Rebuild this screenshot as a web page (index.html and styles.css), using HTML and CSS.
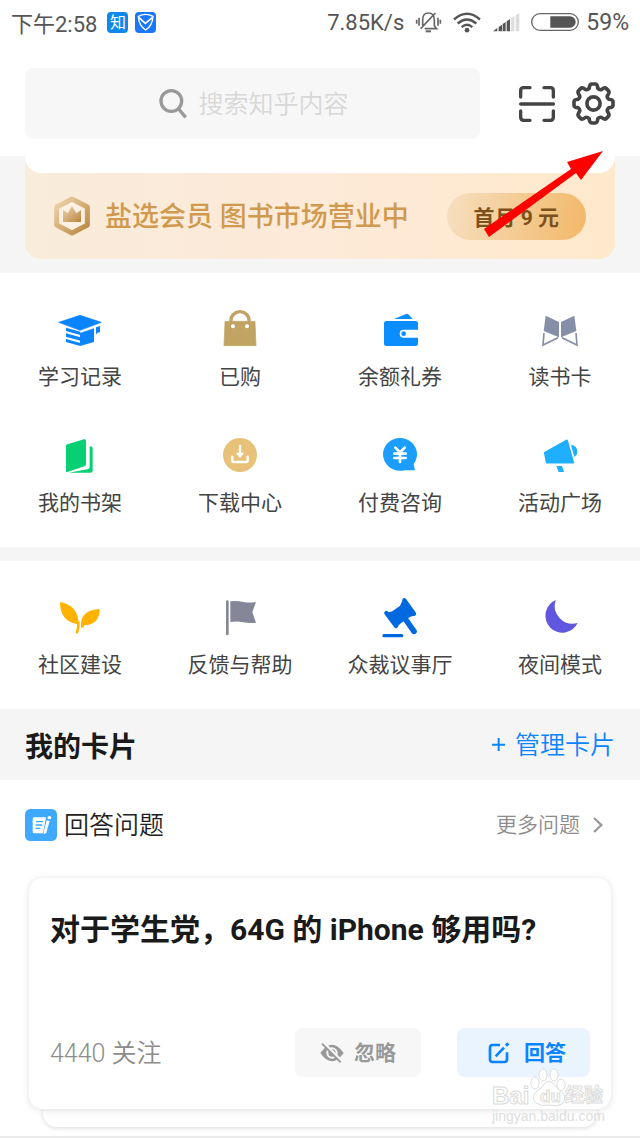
FILE: index.html
```html
<!DOCTYPE html>
<html lang="zh-CN">
<head>
<meta charset="utf-8">
<meta name="viewport" content="width=device-width, initial-scale=1">
<title>我的</title>
<link rel="stylesheet" href="styles.css">
</head>
<body>
<header class="top">
  <div class="status">
    <span class="status-time">下午2:58</span>
    <span class="badge badge-zhi">知</span>
    <svg class="badge-shield" viewBox="0 0 63 63" aria-hidden="true"><rect width="63" height="63" rx="12" fill="#1a76fb"/><path d="M10 13Q32 1 54 13Q52 42 32 54Q12 42 10 13Z" fill="none" stroke="#fff" stroke-width="4"/><path d="M12 17L31 34L52 17" fill="none" stroke="#fff" stroke-width="5"/></svg>
    <span class="status-speed">7.85K/s</span>
    <svg class="ic-bell" viewBox="0 0 75 66" fill="none" stroke="#666" stroke-width="5" aria-hidden="true"><path d="M20 48V26Q20 6 37 6Q55 6 55 26V44L62 53H26M14 53L58 6M2 26V38M9 20V44M66 20V44M73 26V38"/><path d="M29 61H45" stroke-width="6"/></svg>
    <svg class="ic-wifi" viewBox="0 0 84 62" fill="none" stroke="#555" stroke-width="7" aria-hidden="true"><path d="M3 22Q42-12 81 22M14 34Q42 10 70 34M26 45Q42 31 58 45"/><circle cx="42" cy="54" r="7" fill="#555" stroke="none"/></svg>
    <svg class="ic-signal" viewBox="0 0 81 57" aria-hidden="true"><path d="M0 55L13 45V55ZM17 42L27 35V55H17ZM29 33L38 27V55H29ZM41 25L51 18V55H41Z" fill="#555"/><path d="M54 16L64 9V55H54ZM68 7L79 0V55H68Z" fill="#ddd"/></svg>
    <svg class="ic-battery" viewBox="0 0 144 54" aria-hidden="true"><rect x="2" y="2" width="140" height="50" rx="25" fill="none" stroke="#666" stroke-width="4"/><path d="M58 10H117A17 17 0 0 1 117 44H58Z" fill="#555"/></svg>
    <span class="status-percent">59%</span>
  </div>
  <div class="tools">
    <label class="search">
      <svg class="search-icon" viewBox="0 0 90 90" fill="none" stroke="#999" stroke-width="10" aria-hidden="true"><circle cx="43" cy="36" r="31"/><path d="M65 60L86 85"/></svg>
      <input class="search-input" type="text" placeholder="搜索知乎内容" aria-label="搜索知乎内容">
    </label>
    <button class="icon-button" aria-label="扫一扫">
      <svg class="scan" viewBox="0 0 108 108" fill="none" stroke="#444" stroke-width="10" stroke-linecap="round" aria-hidden="true"><path d="M5 33V14Q5 5 14 5H33M75 5H94Q103 5 103 14V33M103 75V94Q103 103 94 103H75M33 103H14Q5 103 5 94V75M5 54H103"/></svg>
    </button>
    <button class="icon-button" aria-label="设置">
      <svg class="gear" viewBox="-65 -65 130 130" fill="none" stroke="#444" stroke-width="11" stroke-linejoin="round" aria-hidden="true"><path d="M-13-46Q-12-59-5-59H5Q12-59 13-46Q18-40 24-42Q34-50 39-45L45-39Q50-34 42-24Q40-18 46-13Q59-12 59-5V5Q59 12 46 13Q40 18 42 24Q50 34 45 39L39 45Q34 50 24 42Q18 40 13 46Q12 59 5 59H-5Q-12 59-13 46Q-18 40-24 42Q-34 50-39 45L-45 39Q-50 34-42 24Q-40 18-46 13Q-59 12-59 5V-5Q-59-12-46-13Q-40-18-42-24Q-50-34-45-39L-39-45Q-34-50-24-42Q-18-40-13-46Z"/><circle r="20"/></svg>
    </button>
  </div>
</header>

<main>
  <section class="vip">
    <div class="vip-card">
      <div class="vip-cap"></div>
      <div class="vip-row">
        <svg class="vip-logo" viewBox="0 0 108 120" aria-hidden="true"><defs><linearGradient id="gold" x1="0" y1="0" x2="1" y2="1"><stop offset="0" stop-color="#f0d5ae"/><stop offset="1" stop-color="#b9853f"/></linearGradient></defs><path d="M54 9L100 33V87L54 111L8 87V33Z" fill="#fbf0e2" stroke="url(#gold)" stroke-width="15" stroke-linejoin="round"/><path d="M27 42L41 52L54 30L67 52L81 42V78H27Z" fill="url(#gold)"/></svg>
        <strong class="vip-text">盐选会员 图书市场营业中</strong>
        <button class="vip-button">首月 9 元</button>
      </div>
    </div>
    <svg class="arrow" viewBox="0 0 120 88" aria-hidden="true"><path d="M120 1L98 30L93 23L6 87L1 79L88 19L84 12Z" fill="#f00"/></svg>
  </section>

  <nav class="grid">
    <a class="tile" href="#"><svg class="tile-icon" viewBox="0 0 144 144" fill="#0a84ff"><path d="M8 49L72 28L136 49L72 73Z" stroke="#0a84ff" stroke-width="2" stroke-linejoin="round"/><path d="M72 81L114 67V108L72 120ZM30 65L73 77V87L30 75ZM30 82L73 94V104L30 92ZM30 99L73 111V120L30 108ZM120 64L132 60V79L124 80L120 86Z"/></svg>学习记录</a>
    <a class="tile" href="#"><svg class="tile-icon" viewBox="0 0 144 144" fill="#c1a364"><path d="M27 46H117L120 119H24Z" stroke="#c1a364" stroke-width="2" stroke-linejoin="round"/><path d="M45 48V43A27 26 0 0 1 99 43V48" fill="none" stroke="#c1a364" stroke-width="10"/><circle cx="51" cy="61" r="6" fill="#fff"/><circle cx="93" cy="61" r="6" fill="#fff"/></svg>已购</a>
    <a class="tile" href="#"><svg class="tile-icon" viewBox="0 0 144 144" fill="#0a8dff"><rect x="24" y="45" width="102" height="75" rx="7"/><path d="M54 39L90 24Q94 22 97 25L110 39Z"/><path d="M127 71H83A12 12 0 0 0 83 95H127Z" fill="#fff"/><circle cx="83" cy="83" r="7"/></svg>余额礼券</a>
    <a class="tile" href="#"><svg class="tile-icon" viewBox="0 0 144 144" fill="#858fa8"><path d="M29 29L69 48V94L23 75ZM115 29L75 48V94L121 75Z"/><path d="M24 81L21 117L66 95M120 81L123 117L78 95" fill="none" stroke="#858fa8" stroke-width="5"/></svg>读书卡</a>
    <a class="tile" href="#"><svg class="tile-icon" viewBox="0 0 144 144" fill="#06cf74"><path d="M30 42Q30 38 34 37L84 22Q90 20 90 26V97Q90 102 85 103L32 121Q30 121 30 118Z"/><path d="M101 43Q110 43 110 49V116Q110 122 104 122H38L94 112Q101 111 101 105Z"/></svg>我的书架</a>
    <a class="tile" href="#"><svg class="tile-icon" viewBox="0 0 144 144"><circle cx="72" cy="69" r="51" fill="#e8c278"/><path d="M49 74V86Q49 90 53 90H91Q95 90 95 86V74M72 42V66" fill="none" stroke="#fff" stroke-width="7" stroke-linecap="round"/><path d="M59 62H85L72 78Z" fill="#fff"/></svg>下载中心</a>
    <a class="tile" href="#"><svg class="tile-icon" viewBox="0 0 144 144"><ellipse cx="72" cy="67" rx="51" ry="49" fill="#1b9eff"/><path d="M72 115H117L112 92Z" fill="#1b9eff"/><path d="M58 47L72 61L86 47M55 65H89M55 78H89M72 61V90" fill="none" stroke="#fff" stroke-width="8" stroke-linecap="round"/></svg>付费咨询</a>
    <a class="tile" href="#"><svg class="tile-icon" viewBox="0 0 144 144" fill="#20aeff"><path d="M26 62L93 25L112 92H32Z" stroke="#20aeff" stroke-width="5" stroke-linejoin="round"/><path d="M105 39Q124 40 124 60Q124 69 115 75ZM61 102H78L84 120H68Z"/></svg>活动广场</a>
  </nav>

  <nav class="grid grid-second">
    <a class="tile" href="#"><svg class="tile-icon" viewBox="0 0 144 144" fill="#ffb300"><path d="M12 24Q66 32 68 91Q12 84 12 24ZM131 45Q131 92 84 94Q83 98 82 102L75 100Q71 48 131 45Z"/><path d="M67 86Q68 103 63 115" fill="none" stroke="#ffb300" stroke-width="8" stroke-linecap="round"/></svg>社区建设</a>
    <a class="tile" href="#"><svg class="tile-icon" viewBox="0 0 144 144" fill="#858799"><path d="M34 23V120" stroke="#858799" stroke-width="8" stroke-linecap="round"/><path d="M43 22Q64 20 82 24Q100 27 120 24L109 55L120 86Q100 89 82 85Q64 81 43 84Z"/></svg>反馈与帮助</a>
    <a class="tile" href="#"><svg class="tile-icon" viewBox="0 0 144 144" fill="#0069e0" stroke="#0069e0" stroke-linecap="round"><path d="M37 57L48 55L74 37L80 24L112 63L100 67L73 86L62 96Z" stroke-width="5"/><path d="M31 57L60 96M85 19L114 59" stroke-width="13"/><path d="M86 72L114 112" stroke-width="17"/><path d="M24 125H77" stroke-width="10"/></svg>众裁议事厅</a>
    <a class="tile" href="#"><svg class="tile-icon" viewBox="0 0 144 144"><path d="M59 18A51 51 0 1 0 125 87A54 54 0 0 1 59 18Z" fill="#5f57de"/></svg>夜间模式</a>
  </nav>

  <section>
    <div class="cards-head">
      <h2 class="cards-title">我的卡片</h2>
      <button class="manage"><svg class="plus" viewBox="0 0 39 39" stroke="#0a84ff" stroke-width="6" aria-hidden="true"><path d="M0 20H39M20 0V39"/></svg><span class="raised">管理卡片</span></button>
    </div>
    <div class="answer-head">
      <svg class="answer-icon" viewBox="0 0 96 96" aria-hidden="true"><rect width="96" height="96" rx="16" fill="#3fa9ff"/><path d="M28 25H63L54 73H28Q23 73 23 68V30Q23 25 28 25ZM65 34L74 36L64 71L57 76L56 69ZM68 23Q75 18 79 25L77 31L68 29Z" fill="#fff"/><path d="M33 38H54M32 48H52M31 58H46" stroke="#3fa9ff" stroke-width="4"/></svg>
      <h3 class="answer-title raised">回答问题</h3>
      <a class="more" href="#"><span class="raised">更多问题</span><svg class="chevron" viewBox="0 0 30 48" fill="none" stroke="#999" stroke-width="7" aria-hidden="true"><path d="M3 3L25 24L3 45"/></svg></a>
    </div>
    <div class="stack">
      <article class="card">
        <h4 class="question">对于学生党，64G 的 iPhone 够用吗?</h4>
        <div class="actions">
          <span class="followers raised">4440 关注</span>
          <button class="btn btn-ignore"><svg class="eye" viewBox="0 0 72 60" aria-hidden="true"><path d="M1 30Q36-20 71 30Q36 80 1 30Z" fill="#999"/><circle cx="36" cy="30" r="14" fill="none" stroke="#f7f7f7" stroke-width="6"/><path d="M10-2L68 56" stroke="#f7f7f7" stroke-width="7"/><path d="M6 2L62 58" stroke="#999" stroke-width="6"/></svg><span class="raised">忽略</span></button>
          <button class="btn btn-answer"><svg class="pen" viewBox="0 0 66 66" fill="none" stroke="#0a84ff" stroke-width="8" aria-hidden="true"><path d="M36 9H14Q6 9 6 17V52Q6 60 14 60H49Q57 60 57 52V31M23 43L48 17"/><path d="M54 11L61 4" stroke-width="9"/></svg><span class="raised">回答</span></button>
        </div>
      </article>
      <div class="card-under"></div>
      <svg class="watermark" viewBox="0 0 120 60" aria-hidden="true">
        <g fill="#fff" stroke="#dcdcdc" stroke-width="1">
          <text class="wm-brand" x="2" y="36">Bai</text>
          <path d="M46 35Q40 29 47 23Q52 20 54 16Q59 11 64 16Q67 20 71 23Q78 29 72 36Q66 39 59 37Q52 39 46 35Z"/>
          <ellipse cx="45" cy="15" rx="4" ry="6"/><ellipse cx="53" cy="7" rx="4" ry="6"/><ellipse cx="64" cy="7" rx="4" ry="6"/><ellipse cx="71" cy="17" rx="4" ry="6"/>
          <text class="wm-du" x="50" y="34">du</text>
          <text class="wm-cn" x="75" y="34">经验</text>
        </g>
        <text class="wm-url" x="2" y="53">jingyan.baidu.com</text>
      </svg>
    </div>
  </section>
</main>
<footer class="tabbar-edge"></footer>
</body>
</html>
```
FILE: styles.css
```css
* { box-sizing: border-box; }

body {
  margin: 0;
  background: #fff;
  color: #444;
  font-family: Roboto, "Noto Sans CJK SC", sans-serif;
}

h2, h3, h4 { margin: 0; }
svg { display: block; flex: none; overflow: visible; }
a { color: inherit; text-decoration: none; }
button {
  margin: 0;
  padding: 0;
  border: 0;
  background: none;
  font-family: inherit;
  cursor: pointer;
}

/* CJK glyphs sit low in their line box; this centres them beside icons */
.raised { padding-bottom: 4px; }

.status {
  display: flex;
  align-items: center;
  height: 44px;
  padding: 0 11px;
  color: #555;
  font-size: 22px;
}
.status-time { margin-right: 10px; }
.badge {
  width: 21px;
  height: 21px;
  margin-right: 7px;
  border-radius: 4px;
  background: #0f88eb;
  color: #fff;
  font-size: 16px;
  line-height: 21px;
  text-align: center;
}
.badge-shield { width: 21px; height: 21px; }
.status-speed { margin-left: auto; }
.status-percent { font-size: 23px; }
.ic-bell { width: 25px; height: 22px; margin-left: 12px; }
.ic-wifi { width: 28px; height: 21px; margin-left: 12px; }
.ic-signal { width: 27px; height: 19px; margin-left: 12px; }
.ic-battery { width: 48px; height: 18px; margin: 0 7px 0 11px; }

.tools {
  display: flex;
  align-items: center;
  padding: 24px 25px 17px;
}
.search {
  display: flex;
  flex: 1;
  align-items: center;
  justify-content: center;
  gap: 12px;
  height: 71px;
  margin-right: 39px;
  border-radius: 8px;
  background: #f7f7f7;
}
.search-icon { width: 30px; height: 30px; }
.search-input {
  width: 150px;
  padding: 2px 0 0;
  border: 0;
  outline: 0;
  background: none;
  color: #444;
  font-family: inherit;
  font-size: 25px;
  font-weight: 350;
}
.search-input::placeholder { color: #d8d8d8; }
.scan { width: 36px; height: 36px; }
.gear { width: 43px; height: 43px; margin-left: 17px; }

.vip {
  position: relative;
  padding: 0 25px 14px;
  background: #f5f5f5;
}
.vip-card {
  border-radius: 0 0 16px 16px;
  background: linear-gradient(90deg, #f9ecda, #fdead9 45%, #ffe9cc);
}
.vip-cap {
  height: 17px;
  border-radius: 0 0 16px 16px;
  background: #fff;
}
.vip-row {
  display: flex;
  align-items: center;
  height: 86px;
  padding: 0 29px;
}
.vip-logo { width: 36px; height: 40px; }
.vip-text {
  margin-left: 15px;
  padding-bottom: 4px;
  color: #cf9a4e;
  font-size: 27px;
  font-weight: 500;
}
.vip-button {
  height: 47px;
  margin-left: auto;
  padding: 0 27px;
  border-radius: 24px;
  background: linear-gradient(100deg, #f6dfc0, #f2b869);
  color: #7d511b;
  font-size: 21px;
  font-weight: 700;
  white-space: nowrap;
}
.arrow {
  position: absolute;
  right: 37px;
  top: -6px;
  width: 120px;
  height: 88px;
}

.grid {
  display: grid;
  grid-template-columns: repeat(4, 1fr);
  row-gap: 40px;
  padding: 33px 0 29px;
}
.grid-second { border-top: 14px solid #f5f5f5; }
.tile {
  display: flex;
  flex-direction: column;
  align-items: center;
  gap: 8px;
  font-size: 21px;
  line-height: 30px;
}
.tile-icon { width: 48px; height: 48px; }

.cards-head {
  display: flex;
  align-items: center;
  justify-content: space-between;
  height: 71px;
  padding: 0 25px;
  background: #f5f5f5;
}
.cards-title { color: #1a1a1a; font-size: 28px; font-weight: 700; }
.manage {
  display: flex;
  align-items: center;
  gap: 10px;
  color: #0a84ff;
  font-size: 25px;
  font-weight: 350;
}
.plus { width: 13px; height: 13px; }

.answer-head {
  display: flex;
  align-items: center;
  height: 90px;
  padding: 0 37px 0 25px;
}
.answer-icon { width: 32px; height: 32px; }
.answer-title {
  margin-left: 7px;
  color: #222;
  font-size: 25px;
  font-weight: 350;
}
.more {
  display: flex;
  align-items: center;
  gap: 13px;
  margin-left: auto;
  color: #8c8c8c;
  font-size: 21px;
  font-weight: 350;
}
.chevron { width: 10px; height: 16px; }

.stack {
  position: relative;
  padding: 8px 29px 9px;
}
.card {
  position: relative;
  padding: 31px 21px 32px;
  border-radius: 14px;
  background: #fff;
  box-shadow: 0 1px 7px rgba(0, 0, 0, 0.13);
}
.question {
  color: #1a1a1a;
  font-size: 30px;
  font-weight: 700;
  line-height: 42px;
}
.actions {
  display: flex;
  align-items: center;
  margin-top: 77px;
}
.followers { margin-right: auto; color: #8c8c8c; font-size: 25px; font-weight: 350; }
.btn {
  display: flex;
  align-items: center;
  height: 49px;
  border-radius: 8px;
  font-size: 21px;
  font-weight: 700;
}
.btn-ignore {
  gap: 10px;
  padding: 0 25px;
  background: #f7f7f7;
  color: #999;
}
.btn-answer {
  gap: 14px;
  margin-left: 36px;
  padding: 0 24px 0 31px;
  background: #e9f4ff;
  color: #0a84ff;
}
.eye { width: 24px; height: 20px; }
.pen { width: 22px; height: 22px; }
.card-under {
  height: 18px;
  margin: 0 14px;
  border-radius: 0 0 14px 14px;
  box-shadow: 0 1px 5px rgba(0, 0, 0, 0.15);
}
.watermark {
  position: absolute;
  right: 30px;
  bottom: 8px;
  width: 120px;
  height: 60px;
}
.wm-brand { font-family: "Liberation Sans", sans-serif; font-size: 24px; font-weight: 700; }
.wm-du { font-family: "Liberation Sans", sans-serif; font-size: 17px; font-weight: 700; }
.wm-cn { font-size: 19px; font-weight: 700; }
.wm-url { fill: #dedede; font-family: "Liberation Sans", sans-serif; font-size: 14px; }

.tabbar-edge { height: 2px; background: #ebebeb; }
```
